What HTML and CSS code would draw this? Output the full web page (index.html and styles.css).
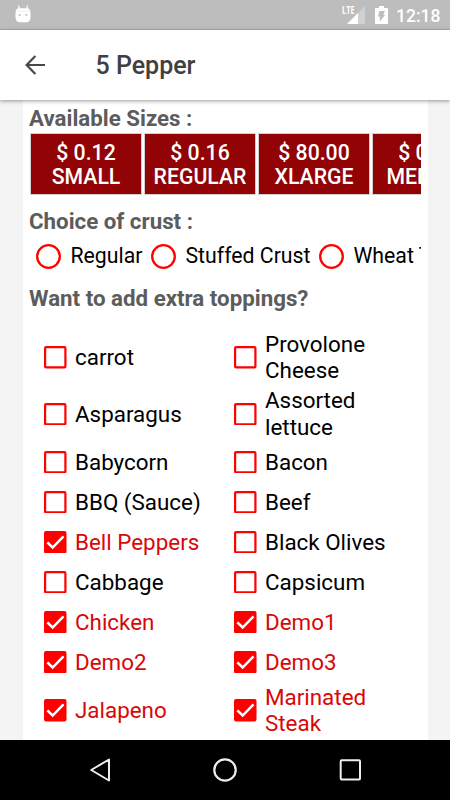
FILE: index.html
```html
<!DOCTYPE html>
<html lang="en">
<head>
<meta charset="utf-8">
<title>5 Pepper</title>
<link rel="stylesheet" href="styles.css">
</head>
<body>
<div class="status">
  <svg class="droid" width="16" height="18" viewBox="0 0 16 18"><path d="M3.2 .5 4.8 4M12.8 .5 11.2 4" stroke="#fff" stroke-width="1.2"/><path d="M.5 8Q.5 3.2 4 3.2H12Q15.500 3.200 15.500 8V12Q15.500 17.300 11 17.300H5Q.5 17.300 .5 12Z" fill="#fff"/><path d="M1.500 6.200H14.500" stroke="#e4e4e4" stroke-width=".6"/><circle cx="4.700" cy="10" r="1" fill="#bdbdbd"/><circle cx="11.300" cy="10" r="1" fill="#bdbdbd"/></svg>
  <span class="lte">LTE</span>
  <svg class="signal" width="18" height="18" viewBox="0 0 18 18"><path d="M18 0V18H0Z" fill="#fff" opacity=".3"/><path d="M11 7V18H0Z" fill="#fff"/></svg>
  <svg class="battery" width="13" height="18" viewBox="0 0 13 18"><path d="M1 2H4V0H9V2H12Q13 2 13 3V17Q13 18 12 18H1Q0 18 0 17V3Q0 2 1 2Z" fill="#fff"/><path d="M4.500 5H10L8.200 8.700H10.200L4.800 15.500V10.500H3Z" fill="#bdbdbd"/></svg>
  <span class="clock">12:18</span>
</div>
<header class="toolbar">
  <svg class="back" width="20" height="20" viewBox="0 0 20 20"><path d="M20 10H2M10.400 1 1.600 10 10.400 19" fill="none" stroke="#484848" stroke-width="2.200"/></svg>
  <h1>5 Pepper</h1>
</header>
<main class="content">
  <section class="panel">
    <h2 class="h-sizes">Available Sizes :</h2>
    <div class="sizes">
      <div class="size">$ 0.12<br>SMALL</div>
      <div class="size">$ 0.16<br>REGULAR</div>
      <div class="size">$ 80.00<br>XLARGE</div>
      <div class="size">$ 0.14<br>MEDIUM</div>
    </div>
    <h2 class="h-crust">Choice of crust :</h2>
    <div class="crusts">
      <div class="crust c1"><svg class="radio" width="25" height="25" viewBox="0 0 25 25"><circle cx="12.500" cy="12.500" r="11.300"/></svg>Regular</div>
      <div class="crust c2"><svg class="radio" width="25" height="25" viewBox="0 0 25 25"><circle cx="12.500" cy="12.500" r="11.300"/></svg>Stuffed Crust</div>
      <div class="crust c3"><svg class="radio" width="25" height="25" viewBox="0 0 25 25"><circle cx="12.500" cy="12.500" r="11.300"/></svg>Wheat Thin</div>
    </div>
    <h2 class="h-top">Want to add extra toppings?</h2>
    <div class="toppings" id="toppings"></div>
  </section>
</main>
<nav class="nav">
  <svg width="22" height="26" viewBox="0 0 22 26"><path d="M20 2.500V23.500L2.200 13Z" fill="none" stroke="#eee" stroke-width="2" stroke-linejoin="round"/></svg>
  <svg width="26" height="26" viewBox="0 0 26 26"><circle cx="13" cy="13" r="10.700" fill="none" stroke="#eee" stroke-width="2.200"/></svg>
  <svg width="22" height="26" viewBox="0 0 22 26"><rect x="1.700" y="3.200" width="19.300" height="19.300" rx="1" fill="none" stroke="#eee" stroke-width="2"/></svg>
</nav>
<script src="toppings.js"></script>
</body>
</html>
```
FILE: styles.css
```css
* { box-sizing: border-box; }
body { margin: 0; width: 450px; height: 800px; overflow: hidden; display: flex; flex-direction: column; background: #f4f4f4; font-family: Roboto, sans-serif; font-size: 22.4px; line-height: 26.4px; color: #000; }
.status { flex: none; height: 30px; background: #bdbdbd; border-bottom: 1px solid #b0b0b0; display: flex; align-items: flex-start; color: #fff; }
.droid { margin: 5px 0 0 14.500px; }
.lte { margin: 5px 0 0 311.500px; width: 12px; font: 700 10.5px/11px "Open Sans", sans-serif; transform: scaleX(.7); transform-origin: left; }
.signal { margin: 6px 0 0 -7px; }
.battery { margin: 6px 0 0 10px; }
.clock { margin: 6px 0 0 8px; font-size: 17.5px; line-height: 21px; font-weight: 500; white-space: nowrap; }
.toolbar { flex: none; height: 70px; background: #fff; display: flex; align-items: center; padding-left: 25px; position: relative; box-shadow: 0 1px 4px rgba(0,0,0,.4); }
.toolbar h1 { margin: 2px 0 0 50.500px; font-size: 25px; line-height: 30px; font-weight: 500; color: #404040; }
.content { flex: 1; min-height: 0; overflow: hidden; padding: 0 22px 0 22.500px; display: flex; }
.panel { flex: 1; min-width: 0; height: 640px; overflow: hidden; background: #fff; padding: 5px 6.500px 0; }
h2 { margin: 0; font-size: 22.3px; line-height: 26px; font-weight: 700; color: #5c5c5c; white-space: nowrap; }
.sizes { display: flex; gap: 2px; overflow: hidden; padding: 2px 0 0 1px; margin-right: 1px; height: 64px; }
.size { flex: 0 0 112px; height: 62px; border: 1px solid #d6cfcf; background: #920305; color: #fff; text-align: center; font-weight: 500; font-size: 21.25px; line-height: 24px; padding-top: 7px; }
.h-crust { margin-top: 13px; }
.crusts { display: flex; height: 43px; overflow: hidden; padding-left: 7px; margin-right: 1px; align-items: center; font-size: 21.25px; }
.crust { display: flex; align-items: center; flex: none; white-space: nowrap; padding-top: 1px; }
.c1 { width: 115px; }
.c2 { width: 168px; }
.radio { flex: none; margin-right: 9.500px; fill: none; stroke: #f00; stroke-width: 2.300; }
.h-top { margin-top: 8px; }
.toppings { margin: 18px 0 0 15px; display: grid; grid-template-columns: 190px 170px; }
.item { display: flex; align-items: center; height: 40px; }
.item.tall { height: 56.500px; }
.item svg { flex: none; margin-right: 8.500px; }
.item span { width: 130px; }
.item.on { color: #d80808; }
.nav { flex: none; height: 60px; background: #000; display: flex; align-items: center; justify-content: space-between; padding: 0 89px; }
```
FILE: toppings.js
```js
const rows = [
  [["carrot", 0], ["Provolone Cheese", 0], "tall"],
  [["Asparagus", 0], ["Assorted lettuce", 0], "tall"],
  [["Babycorn", 0], ["Bacon", 0]],
  [["BBQ (Sauce)", 0], ["Beef", 0]],
  [["Bell Peppers", 1], ["Black Olives", 0]],
  [["Cabbage", 0], ["Capsicum", 0]],
  [["Chicken", 1], ["Demo1", 1]],
  [["Demo2", 1], ["Demo3", 1]],
  [["Jalapeno", 1], ["Marinated Steak", 1], "tall"]
];
const empty = '<rect x="1.100" y="1.100" width="20.300" height="20.300" rx="1" fill="#fff" stroke="#f00" stroke-width="2.200"/>';
const ticked = '<rect width="22.500" height="22.500" rx="2" fill="#f00"/><path d="M3.300 11.300 8.700 16.500 19.500 5.400" fill="none" stroke="#fff" stroke-width="2.500"/>';
document.getElementById("toppings").innerHTML = rows.map(([a, b, size]) =>
  [a, b].map(([name, on]) =>
    `<div class="item ${size || ""} ${on ? "on" : ""}"><svg width="22.500" height="22.500" viewBox="0 0 22.500 22.500">${on ? ticked : empty}</svg><span>${name}</span></div>`
  ).join("")).join("");
```
